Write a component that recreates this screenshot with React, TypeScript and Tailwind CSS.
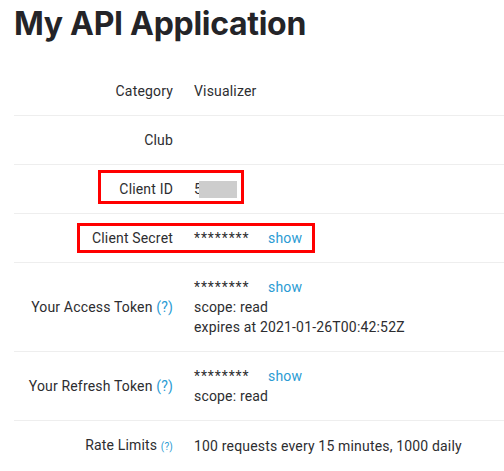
import React from "react";

const LINK = "text-[#2b9bd3]";

function Row({
  label,
  children,
}: {
  label: React.ReactNode;
  children?: React.ReactNode;
}) {
  return (
    <div className="grid grid-cols-[159px_1fr] gap-x-[21px] border-b border-[#eeeeee] py-[14px] leading-5">
      <div className="flex items-center justify-end text-right">{label}</div>
      <div className="flex flex-col justify-center">{children}</div>
    </div>
  );
}

function Secret({ show = true }: { show?: boolean }) {
  return (
    <div className="flex items-center">
      <span className="inline-block w-[74px] text-[14px] tracking-[0.9px]">********</span>
      {show && <span className={LINK}>show</span>}
    </div>
  );
}

export default function App() {
  return (
    <div className="relative w-[504px] h-[471px] overflow-hidden bg-white text-[#2d2d30] text-[14px] tracking-[0.17px] font-['Roboto',sans-serif]">
      <h1 className="ml-[14px] mt-[4px] mb-[23px] text-[32px] leading-[40px] font-bold text-[#242428] font-['Inter',sans-serif] tracking-[-0.3px]">
        My API Application
      </h1>
      <div className="ml-[14px]">
        <Row label="Category">Visualizer</Row>
        <Row label="Club" />
        <Row label="Client ID">
          <div className="flex items-center">
            <span>5</span>
            <span className="relative -ml-[3px] inline-block w-[38px] h-[17px] bg-[#cdcdcd]" />
          </div>
        </Row>
        <Row label="Client Secret">
          <Secret />
        </Row>
        <Row
          label={
            <span>
              Your Access Token <span className={LINK}>(?)</span>
            </span>
          }
        >
          <Secret />
          <div>scope: read</div>
          <div>expires at 2021-01-26T00:42:52Z</div>
        </Row>
        <Row
          label={
            <span>
              Your Refresh Token <span className={LINK}>(?)</span>
            </span>
          }
        >
          <Secret />
          <div>scope: read</div>
        </Row>
        <Row
          label={
            <span>
              Rate Limits <span className={`${LINK} text-[10px]`}>(?)</span>
            </span>
          }
        >
          100 requests every 15 minutes, 1000 daily
        </Row>
      </div>

      {/* annotation boxes */}
      <div className="absolute left-[98px] top-[170px] w-[146px] h-[34px] border-[3px] border-[#ff0000]" />
      <div className="absolute left-[77px] top-[223px] w-[238px] h-[30px] border-[3px] border-[#ff0000]" />
    </div>
  );
}
